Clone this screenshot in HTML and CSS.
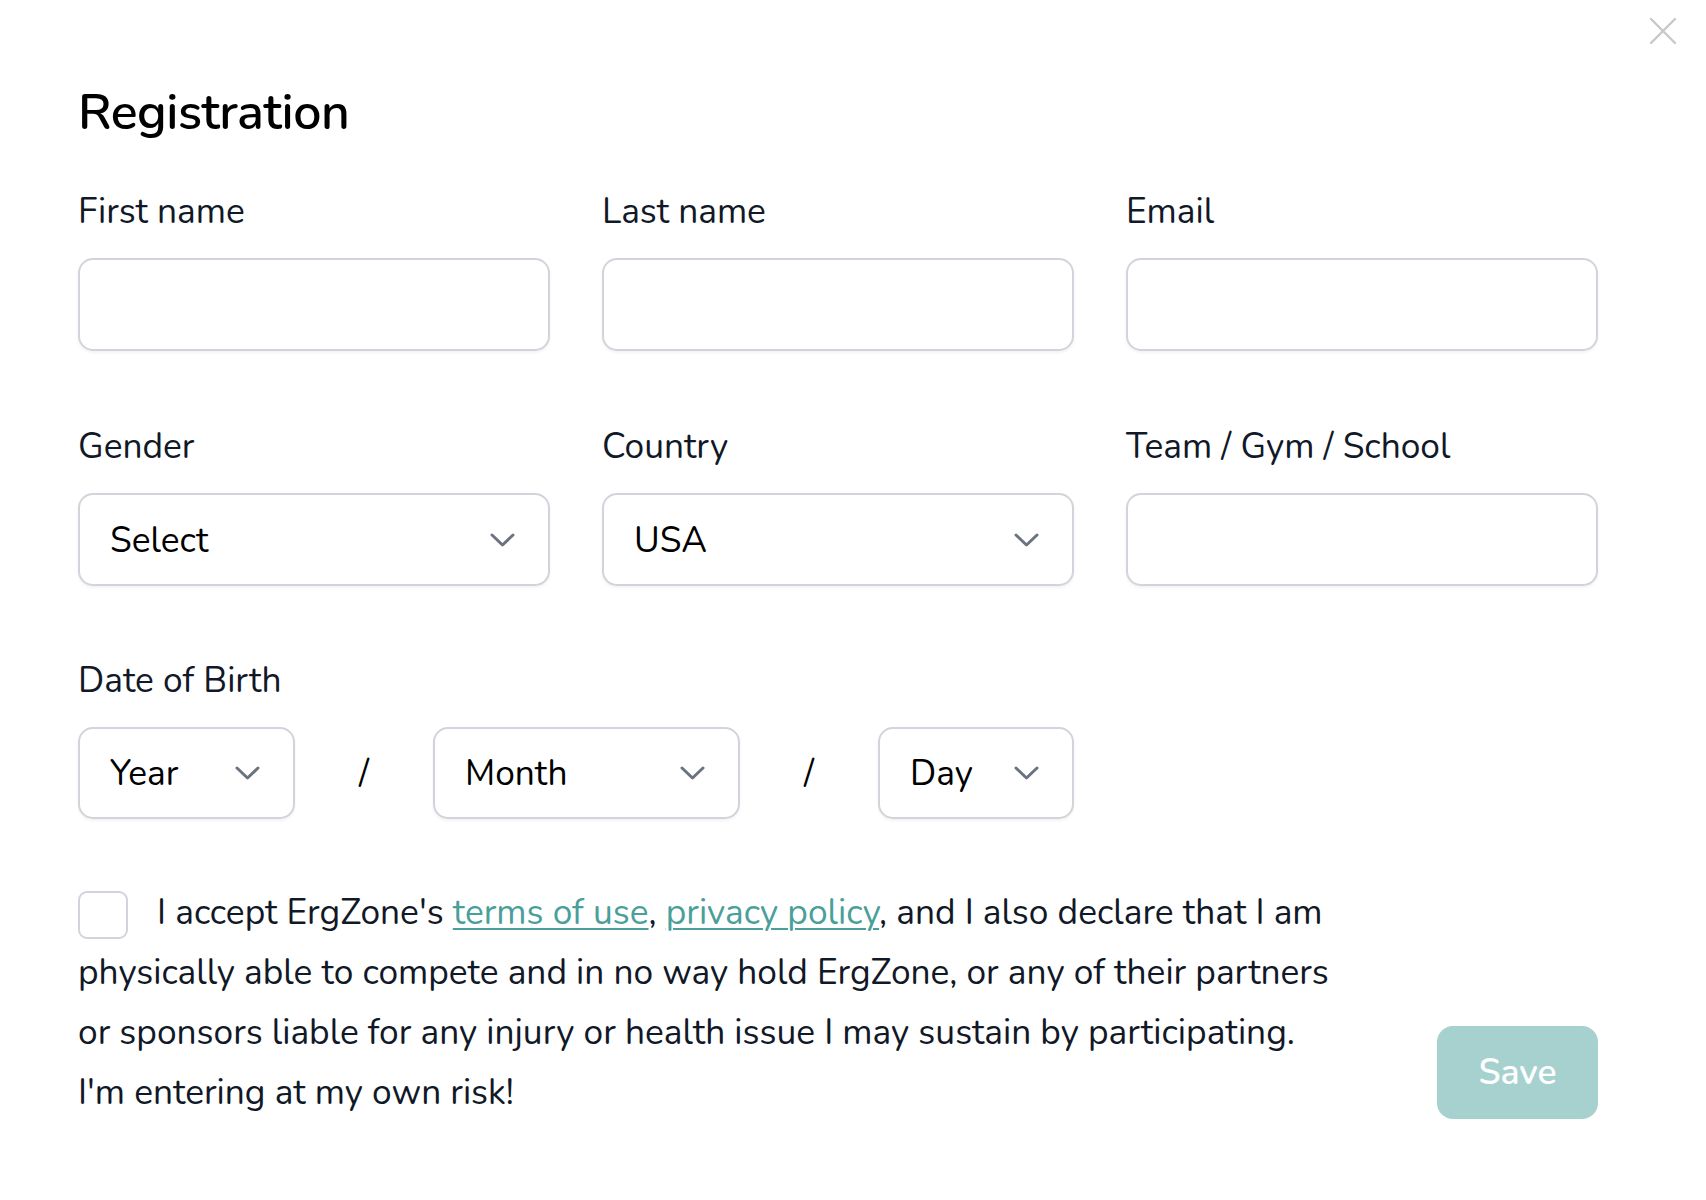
FILE: index.html
```html
<!DOCTYPE html>
<html lang="en">
<head>
<meta charset="utf-8">
<title>Registration</title>
<link rel="stylesheet" href="styles.css">
</head>
<body>
<div class="modal">
  <button class="close" type="button" aria-label="Close">
    <svg width="28" height="28" viewBox="0 0 28 28" fill="none" stroke="#c8c8c8" stroke-width="2.4" stroke-linecap="round"><path d="M2 2 L26 26 M26 2 L2 26"/></svg>
  </button>

  <h1 class="title">Registration</h1>

  <div class="grid">
    <div class="field">
      <label class="label">First name</label>
      <div class="box"></div>
    </div>
    <div class="field">
      <label class="label">Last name</label>
      <div class="box"></div>
    </div>
    <div class="field">
      <label class="label">Email</label>
      <div class="box"></div>
    </div>
    <div class="field">
      <label class="label">Gender</label>
      <div class="box select"><span>Select</span><svg class="chev" width="25" height="14" viewBox="0 0 25 14"><path d="M2 2 L12.5 12 L23 2"/></svg></div>
    </div>
    <div class="field">
      <label class="label">Country</label>
      <div class="box select"><span>USA</span><svg class="chev" width="25" height="14" viewBox="0 0 25 14"><path d="M2 2 L12.5 12 L23 2"/></svg></div>
    </div>
    <div class="field">
      <label class="label">Team / Gym / School</label>
      <div class="box"></div>
    </div>
  </div>

  <div class="field dob">
    <label class="label">Date of Birth</label>
    <div class="dob-row">
      <div class="box select dob-box year"><span>Year</span><svg class="chev" width="25" height="14" viewBox="0 0 25 14"><path d="M2 2 L12.5 12 L23 2"/></svg></div>
      <span class="sep">/</span>
      <div class="box select dob-box month"><span>Month</span><svg class="chev" width="25" height="14" viewBox="0 0 25 14"><path d="M2 2 L12.5 12 L23 2"/></svg></div>
      <span class="sep">/</span>
      <div class="box select dob-box day"><span>Day</span><svg class="chev" width="25" height="14" viewBox="0 0 25 14"><path d="M2 2 L12.5 12 L23 2"/></svg></div>
    </div>
  </div>

  <div class="footer">
    <p class="terms"><span class="check"></span>I accept ErgZone's <a href="#">terms of use</a>, <a href="#">privacy policy</a>, and I also declare that I am<br>physically able to compete and in no way hold ErgZone, or any of their partners<br>or sponsors liable for any injury or health issue I may sustain by participating.<br>I'm entering at my own risk!</p>
    <button class="save" type="button">Save</button>
  </div>
</div>
</body>
</html>
```

FILE: styles.css
```css
* {
  box-sizing: border-box;
}

body {
  margin: 0;
  background: #ffffff;
  font-family: "Nunito", Lato, "Noto Sans", sans-serif;
  color: #111827;
}

.modal {
  position: relative;
  width: 1706px;
  height: 1200px;
  padding: 85px 108px 0 78px;
}

.close {
  position: absolute;
  top: 17px;
  right: 29px;
  width: 28px;
  height: 28px;
  padding: 0;
  border: 0;
  background: none;
  display: block;
}

.close svg {
  display: block;
}

.title {
  margin: 0;
  font-size: 50px;
  line-height: 56px;
  font-weight: 600;
  letter-spacing: -0.5px;
  color: #000000;
}

.grid {
  display: grid;
  grid-template-columns: repeat(3, 1fr);
  column-gap: 52px;
  row-gap: 78px;
  margin-top: 53px;
}

.field {
  display: flex;
  flex-direction: column;
  gap: 30px;
}

.label {
  font-size: 35.3px;
  line-height: 34px;
  color: #111827;
}

.box {
  height: 93px;
  border: 2px solid #d1d5db;
  border-radius: 15px;
  box-shadow: 0 2px 3px rgba(0, 0, 0, 0.05);
  background: #ffffff;
}

.select {
  display: flex;
  align-items: center;
  justify-content: space-between;
  padding: 0 33px 0 30px;
  font-size: 35.3px;
  color: #000000;
}

.chev {
  display: block;
  flex: none;
}

.chev path {
  fill: none;
  stroke: #6b7280;
  stroke-width: 3;
  stroke-linecap: round;
  stroke-linejoin: round;
}

.dob {
  margin-top: 77px;
}

.dob-row {
  display: flex;
  align-items: center;
}

.dob-box {
  height: 92px;
}

.year {
  width: 217px;
}

.month {
  width: 307px;
}

.day {
  width: 196px;
}

.sep {
  width: 138px;
  text-align: center;
  font-size: 35.3px;
  color: #000000;
}

.footer {
  display: flex;
  align-items: flex-end;
  justify-content: space-between;
  margin-top: 63px;
}

.terms {
  margin: 0;
  font-size: 35.3px;
  line-height: 60px;
  white-space: nowrap;
  color: #111827;
}

.terms a {
  color: #4b9f9a;
  text-decoration: underline;
  text-decoration-thickness: 2px;
  text-underline-offset: 4px;
}

.check {
  display: inline-block;
  width: 50px;
  height: 48px;
  margin: 9px 29px 0 0;
  vertical-align: top;
  border: 2px solid #d1d5db;
  border-radius: 9px;
}

.save {
  width: 161px;
  height: 93px;
  margin-bottom: 3px;
  border: 0;
  border-radius: 16px;
  background: #a6d1cf;
  color: #ffffff;
  font-family: "Nunito", Lato, "Noto Sans", sans-serif;
  font-size: 35.5px;
  font-weight: 600;
}
```
